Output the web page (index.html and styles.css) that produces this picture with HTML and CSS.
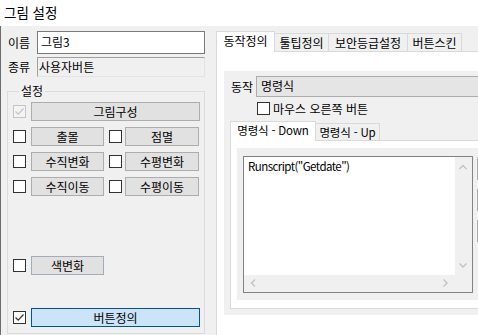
FILE: index.html
```html
<!DOCTYPE html>
<html lang="ko">
<head>
<meta charset="utf-8">
<title>그림 설정</title>
<link rel="stylesheet" href="styles.css">
</head>
<body>
<div class="window">
  <div class="titlebar">그림 설정</div>
  <div class="body">
    <div class="left">
      <div class="field-row">
        <span class="lbl">이름</span>
        <div class="input">그림3</div>
      </div>
      <div class="field-row row-kind">
        <span class="lbl">종류</span>
        <div class="readonly">사용자버튼</div>
      </div>
      <fieldset class="group">
        <legend>설정</legend>
        <div class="opt-row">
          <span class="cb disabled"><svg viewBox="0 0 11 11" width="11" height="11"><polyline points="1.5,5.5 4.2,8.2 9.5,2.5" fill="none" stroke="#c4c4c4" stroke-width="1.2"/></svg></span>
          <div class="btn full">그림구성</div>
        </div>
        <div class="opt-row">
          <span class="cb"></span>
          <div class="btn half1">출몰</div>
          <span class="cb second"></span>
          <div class="btn half2">점멸</div>
        </div>
        <div class="opt-row">
          <span class="cb"></span>
          <div class="btn half1">수직변화</div>
          <span class="cb second"></span>
          <div class="btn half2">수평변화</div>
        </div>
        <div class="opt-row">
          <span class="cb"></span>
          <div class="btn half1">수직이동</div>
          <span class="cb second"></span>
          <div class="btn half2">수평이동</div>
        </div>
        <div class="opt-row row-color">
          <span class="cb"></span>
          <div class="btn half1 hover">색변화</div>
        </div>
        <div class="opt-row row-define">
          <span class="cb"><svg viewBox="0 0 11 11" width="11" height="11"><polyline points="1.5,5.5 4.2,8.2 9.5,2.5" fill="none" stroke="#333" stroke-width="1.2"/></svg></span>
          <div class="btn full focused">버튼정의</div>
        </div>
      </fieldset>
    </div>
    <div class="right">
      <div class="tabs">
        <div class="tab active w59">동작정의</div>
        <div class="tab w54">툴팁정의</div>
        <div class="tab w79">보안등급설정</div>
        <div class="tab w54">버튼스킨</div>
      </div>
      <div class="page">
        <div class="action">
          <div class="action-row">
            <span class="lbl2">동작</span>
            <div class="combo">명령식</div>
          </div>
          <div class="mouse-row">
            <span class="cb"></span>
            <span class="mouse-text">마우스 오른쪽 버튼</span>
          </div>
          <div class="subtabs">
            <div class="subtab active w86">명령식 - Down</div>
            <div class="subtab w64">명령식 - Up</div>
          </div>
          <div class="subpage">
            <div class="editor-wrap">
              <div class="textbox">
                <div class="code">Runscript("Getdate")</div>
                <div class="vscroll">
                  <svg width="17" height="17" viewBox="0 0 17 17"><polyline points="4.5,12 8,8.5 11.5,12" fill="none" stroke="#c3c3c3" stroke-width="1.4"/></svg>
                  <svg width="17" height="17" viewBox="0 0 17 17"><polyline points="4.5,5.5 8,9 11.5,5.5" fill="none" stroke="#c3c3c3" stroke-width="1.4"/></svg>
                </div>
                <div class="hscroll">
                  <svg width="17" height="17" viewBox="0 0 17 17"><polyline points="11,4.5 7.5,8 11,11.5" fill="none" stroke="#c3c3c3" stroke-width="1.4"/></svg>
                  <svg width="17" height="17" viewBox="0 0 17 17"><polyline points="5.5,4.5 9,8 5.5,11.5" fill="none" stroke="#c3c3c3" stroke-width="1.4"/></svg>
                </div>
                <div class="corner"></div>
              </div>
              <div class="side-btns">
                <div class="side-btn"></div>
                <div class="side-btn"></div>
                <div class="side-btn"></div>
              </div>
            </div>
          </div>
        </div>
      </div>
    </div>
  </div>
</div>
</body>
</html>
```

FILE: styles.css
```css
* { box-sizing: border-box; }
html, body { margin: 0; padding: 0; }
body {
  width: 478px;
  height: 335px;
  overflow: hidden;
  background: #f0f0f0;
  font-family: "Noto Sans CJK KR", "Noto Sans", sans-serif;
  font-size: 12px;
  color: #000;
}
.window {
  width: 478px;
  height: 335px;
  display: flex;
  flex-direction: column;
  overflow: hidden;
}
.titlebar {
  flex: none;
  height: 26px;
  background: #fff;
  padding-left: 4px;
  font-size: 13.5px;
  line-height: 24px;
}
.body {
  flex: 1;
  min-height: 0;
  display: flex;
  border-left: 1px solid #6d6d6d;
}

/* left column */
.left {
  flex: none;
  width: 215px;
  display: flex;
  flex-direction: column;
  padding: 5px 0 1px 6px;
}
.field-row { display: flex; align-items: center; }
.row-kind { margin-top: 3px; }
.lbl { width: 30px; padding-left: 1px; line-height: 14px; }
.input {
  width: 168px;
  height: 23px;
  border: 1px solid #7a7a7a;
  background: #fff;
  padding-left: 3px;
  line-height: 20px;
}
.readonly {
  width: 168px;
  height: 20px;
  border: 1px solid;
  border-color: #a0a0a0 #e3e3e3 #e3e3e3 #a0a0a0;
  padding-left: 1px;
  line-height: 17px;
}
.group {
  flex: 1;
  min-height: 0;
  width: 198px;
  margin: 8px 0 0 0;
  border: 1px solid #dcdcdc;
  padding: 5px 4px 0 5px;
}
.group legend {
  margin-left: 6px;
  padding: 0 2px;
  line-height: 12px;
}
.opt-row { display: flex; align-items: center; height: 19px; }
.opt-row + .opt-row { margin-top: 6px; }
.opt-row.row-color { margin-top: 60px; }
.opt-row.row-define { margin-top: 33px; }
.cb {
  flex: none;
  width: 13px;
  height: 13px;
  border: 1px solid #333;
  background: #fff;
  display: block;
}
.cb svg { display: block; }
.cb.disabled { border-color: #c4c4c4; background: #f4f4f4; }
.cb.second { margin-left: 5px; }
.btn {
  flex: none;
  height: 19px;
  border: 1px solid #adadad;
  background: #e1e1e1;
  display: flex;
  align-items: center;
  justify-content: center;
  line-height: 14px;
}
.btn.full { width: 169px; margin-left: 5px; }
.btn.half1 { width: 73px; margin-left: 5px; }
.btn.half2 { width: 74px; margin-left: 3px; }
.btn.hover { border-color: #a3adb7; }
.btn.focused { background: #cce4f7; border-color: #005499; }

/* right column */
.right {
  flex: none;
  width: 300px;
  display: flex;
  flex-direction: column;
  padding-top: 5px;
}
.tabs {
  display: flex;
  align-items: flex-end;
  height: 21px;
  margin-bottom: -1px;
  position: relative;
  z-index: 1;
}
.tab {
  flex: none;
  height: 18px;
  margin-bottom: 1px;
  border-top: 1px solid #d9d9d9;
  border-right: 1px solid #d9d9d9;
  line-height: 17px;
  text-align: center;
  background: #f0f0f0;
  white-space: nowrap;
}
.tab.active {
  height: 21px;
  margin-bottom: 0;
  border: 1px solid #d9d9d9;
  border-bottom: none;
  background: #fff;
}
.w54 { width: 54px; }
.w59 { width: 59px; }
.w64 { width: 64px; }
.w79 { width: 79px; }
.w86 { width: 86px; }
.page {
  flex: 1;
  background: #fff;
  border-left: 1px solid #d9d9d9;
  border-top: 1px solid #d9d9d9;
  padding: 19px 0 0 7px;
}
.action {
  height: 244px;
  background: #f0f0f0;
  padding: 5px 0 6px 6px;
  display: flex;
  flex-direction: column;
}
.action-row { display: flex; align-items: center; }
.lbl2 { width: 26px; padding-left: 1px; line-height: 14px; }
.combo {
  flex: 1;
  height: 21px;
  border: 1px solid #adadad;
  background: #e5e5e5;
  padding-left: 4px;
  line-height: 18px;
}
.mouse-row {
  display: flex;
  align-items: center;
  height: 13px;
  margin: 5px 0 0 27px;
}
.mouse-text { margin-left: 3px; line-height: 13px; white-space: nowrap; }
.subtabs {
  display: flex;
  align-items: flex-end;
  height: 20px;
  margin-top: 6px;
  margin-bottom: -1px;
  position: relative;
  z-index: 1;
}
.subtab {
  flex: none;
  height: 17px;
  margin-bottom: 1px;
  border-top: 1px solid #d9d9d9;
  border-right: 1px solid #d9d9d9;
  font-size: 11.5px;
  line-height: 16px;
  text-align: center;
  background: #f0f0f0;
  white-space: nowrap;
  letter-spacing: -0.2px;
}
.subtab.active {
  height: 20px;
  margin-bottom: 0;
  border: 1px solid #d9d9d9;
  border-bottom: none;
  background: #fff;
}
.subpage {
  flex: 1;
  min-height: 0;
  background: #fff;
  border: 1px solid #d9d9d9;
  border-right: none;
  padding: 7px 0 8px 6px;
  display: flex;
  flex-direction: column;
}
.editor-wrap {
  flex: 1;
  min-height: 0;
  background: #f0f0f0;
  padding: 8px 0 7px 6px;
  display: flex;
  gap: 4px;
}
.textbox {
  flex: none;
  width: 230px;
  border: 1px solid #828282;
  background: #fff;
  display: grid;
  grid-template-columns: 1fr 17px;
  grid-template-rows: 1fr 17px;
}
.code {
  padding: 2px 4px;
  font-size: 11.5px;
  letter-spacing: -0.55px;
  line-height: 15px;
  white-space: nowrap;
}
.vscroll {
  background: #f0f0f0;
  display: flex;
  flex-direction: column;
  justify-content: space-between;
}
.hscroll {
  background: #f0f0f0;
  display: flex;
  justify-content: space-between;
}
.vscroll svg, .hscroll svg { display: block; }
.corner { background: #f0f0f0; }
.side-btns {
  display: flex;
  flex-direction: column;
  gap: 9px;
  padding-top: 2px;
}
.side-btn {
  width: 60px;
  height: 22px;
  border: 1px solid #adadad;
  background: #e1e1e1;
}
```
